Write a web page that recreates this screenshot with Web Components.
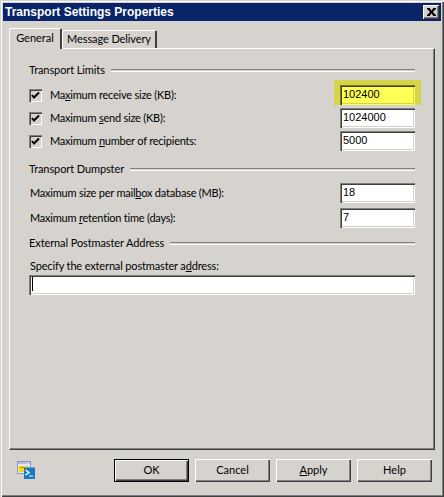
<!DOCTYPE html>
<html><head><meta charset="utf-8"><style>
html,body{margin:0;padding:0;background:#d6d3ce}
body{font:11px Lato,"Liberation Sans",Arial,sans-serif;color:#000}
</style></head><body>
<x-dialog>
  <x-tabs slot="tabs"></x-tabs>
  <x-heading>Transport Limits</x-heading>
  <div class="rows" style="display:grid;row-gap:3px;margin-top:8px">
    <x-field check><span>Ma<u>x</u>imum receive size (KB):</span><x-input slot="input" value="102400" hl></x-input></x-field>
    <x-field check><span>Maximum <u>s</u>end size (KB):</span><x-input slot="input" value="1024000"></x-input></x-field>
    <x-field check><span>Maximum <u>n</u>umber of recipients:</span><x-input slot="input" value="5000"></x-input></x-field>
  </div>
  <x-heading style="margin-top:11px">Transport Dumpster</x-heading>
  <div class="rows" style="display:grid;row-gap:5px;margin-top:7px">
    <x-field><span>Maximum size per mail<u>b</u>ox database (MB):</span><x-input slot="input" value="18"></x-input></x-field>
    <x-field><span>Maximum <u>r</u>etention time (days):</span><x-input slot="input" value="7"></x-input></x-field>
  </div>
  <x-heading style="margin-top:8px">External Postmaster Address</x-heading>
  <div style="margin:9px 0 1px 1px;height:14px;line-height:14px;letter-spacing:-.15px">Specify the external postmaster a<u>d</u>dress:</div>
  <x-input wide value="" style="margin-top:2px"></x-input>
  <x-button slot="footer" default>OK</x-button>
  <x-button slot="footer">Cancel</x-button>
  <x-button slot="footer"><u>A</u>pply</x-button>
  <x-button slot="footer">Help</x-button>
</x-dialog>
<script>
function def(name,css,html){
  customElements.define(name,class extends HTMLElement{
    connectedCallback(){
      if(this.shadowRoot)return;
      const r=this.attachShadow({mode:'open'});
      r.innerHTML='<style>'+css+'</style>'+(typeof html==='function'?html(this):html);
    }
  });
}
def('x-dialog',`
:host{display:block;box-sizing:border-box;width:444px;height:497px;background:#d6d3ce;padding:3px 3px 2px 3px;
 box-shadow:inset 1px 1px 0 #d6d3ce,inset 2px 2px 0 #fff,inset -1px -1px 0 #404040,inset -2px -2px 0 #808080;
 font:11px Lato,"Liberation Sans",Arial,sans-serif}
.title{height:18px;background:#0a246a;display:flex;align-items:center;justify-content:space-between;padding:0 2px}
.title b{color:#fff;font:bold 12px "Liberation Sans",Arial,sans-serif;line-height:18px}
.close{box-sizing:border-box;width:16px;height:14px;background:#d6d3ce;display:flex;align-items:center;justify-content:center;
 box-shadow:inset 1px 1px 0 #fff,inset -1px -1px 0 #404040,inset -2px -2px 0 #808080}
.body{margin:7px 6px 0 6px}
.panel{box-sizing:border-box;height:402px;padding:14px 19px 0 19px;
 border-top:1px solid #fff;border-left:1px solid #fff;border-right:1px solid #404040;border-bottom:1px solid #404040;
 box-shadow:inset -1px -1px 0 #808080}
.footer{display:flex;align-items:center;margin:9px 0 0 0;padding:0 3px 0 8px;gap:6px}
.icon{width:18px;height:18px;margin-right:auto;flex:none;margin-top:-2px}
`,`<div class="title"><b>Transport Settings Properties</b>
<div class="close"><svg width="9" height="8" viewBox="0 0 10 9" preserveAspectRatio="none"><path d="M0 0H3L5 3L7 0H10V1L6.500 4.500L10 8V9H7L5 6L3 9H0V8L3.500 4.500L0 1Z" fill="#000"/></svg></div></div>
<div class="body"><slot name="tabs"></slot><div class="panel"><slot></slot></div>
<div class="footer"><svg class="icon" viewBox="0 0 18 18" width="18" height="18">
<rect x="0.5" y="0.5" width="13" height="12" fill="#e4e8f4" stroke="#8a94bc"/>
<rect x="1" y="1" width="12" height="2" fill="#b4bcd8"/><path d="M9 2h1M11 2h1" stroke="#fff"/>
<rect x="2" y="5" width="10" height="6" fill="#ffd800"/><rect x="3" y="6" width="6" height="1" fill="#c89000"/>
<rect x="7" y="6" width="11" height="12" fill="#1a78c4"/><rect x="7" y="6" width="11" height="1" fill="#5aa8e0"/>
<path d="M8.500 9L12 11.500L8.500 14" fill="none" stroke="#fff" stroke-width="1.500"/><path d="M12 15h4" stroke="#fff"/></svg><slot name="footer"></slot></div></div>`);
def('x-tabs',`
:host{display:flex;align-items:flex-end;height:20px;font-size:11px}
.t{box-sizing:border-box;flex:none;white-space:nowrap;border:1px solid #fff;border-bottom:0;border-right:2px solid #404040;border-radius:2px 2px 0 0;line-height:16px;text-align:center}
.a{width:53px;height:21px;padding-top:1px;position:relative;top:1px;z-index:1;background:#d6d3ce}
.b{width:95px;height:18px;letter-spacing:-.1px}
`,`<div class="t a">General</div><div class="t b">Message Delivery</div>`);
def('x-heading',`
:host{display:flex;align-items:center;height:14px;gap:6px;font-size:11px;white-space:nowrap}
span{letter-spacing:-.1px;margin-top:-2px}
i{flex:1;height:1px;border-top:1px solid #808080;border-bottom:1px solid #fff}
`,`<span><slot></slot></span><i></i>`);
def('x-field',`
:host{display:flex;align-items:center;height:20px;font-size:11px;white-space:nowrap}
.c{box-sizing:border-box;flex:none;width:13px;height:13px;margin-right:8px;background:#d6d3ce;display:flex;
 box-shadow:inset 1px 1px 0 #808080,inset 2px 2px 0 #404040,inset -1px -1px 0 #fff,inset -2px -2px 0 #d6d3ce}
.l{flex:1;padding-left:1px;letter-spacing:-.22px;margin-top:-1px}
:host([check]) .l{padding-left:0}
`,h=>(h.hasAttribute('check')?`<span class="c"><svg width="13" height="13" viewBox="0 0 13 13"><path d="M3 6L5 8.500L10 3.500" fill="none" stroke="#000" stroke-width="2"/></svg></span>`:'')+`<span class="l"><slot></slot></span><slot name="input"></slot>`);
def('x-input',`
:host{display:block;position:relative;box-sizing:border-box;width:75px;height:20px;font:11px "Liberation Sans",Arial,sans-serif;flex:none;letter-spacing:0}
:host([wide]){width:100%}
.b{box-sizing:border-box;height:100%;background:#fff;padding:2px 0 0 3px;line-height:14px;position:relative;
 box-shadow:inset 1px 1px 0 #808080,inset 2px 2px 0 #404040,inset -1px -1px 0 #fff,inset -2px -2px 0 #d6d3ce}
.hl{position:absolute;left:-6px;right:-6px;top:-5px;bottom:0;background:#d8d44a}
:host([hl]) .b{background:#ffff55;box-shadow:inset 1px 1px 0 #7c7a2e,inset 2px 2px 0 #403f10,inset -1px -1px 0 #ffff55,inset -2px -2px 0 #d8d44a}
.caret{display:inline-block;width:1px;height:14px;background:#000;vertical-align:top}
`,h=>(h.hasAttribute('hl')?'<div class="hl"></div>':'')+`<div class="b">${h.getAttribute('value')||''}${h.hasAttribute('wide')?'<span class="caret"></span>':''}</div>`);
def('x-button',`
:host{display:block;flex:none;box-sizing:border-box;width:75px;height:23px;text-align:center;line-height:22px;font-size:11px;background:#d6d3ce;
 box-shadow:inset 1px 1px 0 #fff,inset -1px -1px 0 #404040,inset -2px -2px 0 #808080}
:host([default]){box-shadow:inset 0 0 0 1px #000,inset 2px 2px 0 #fff,inset -2px -2px 0 #404040,inset -3px -3px 0 #808080}
`,`<slot></slot>`);
</script>
</body></html>
